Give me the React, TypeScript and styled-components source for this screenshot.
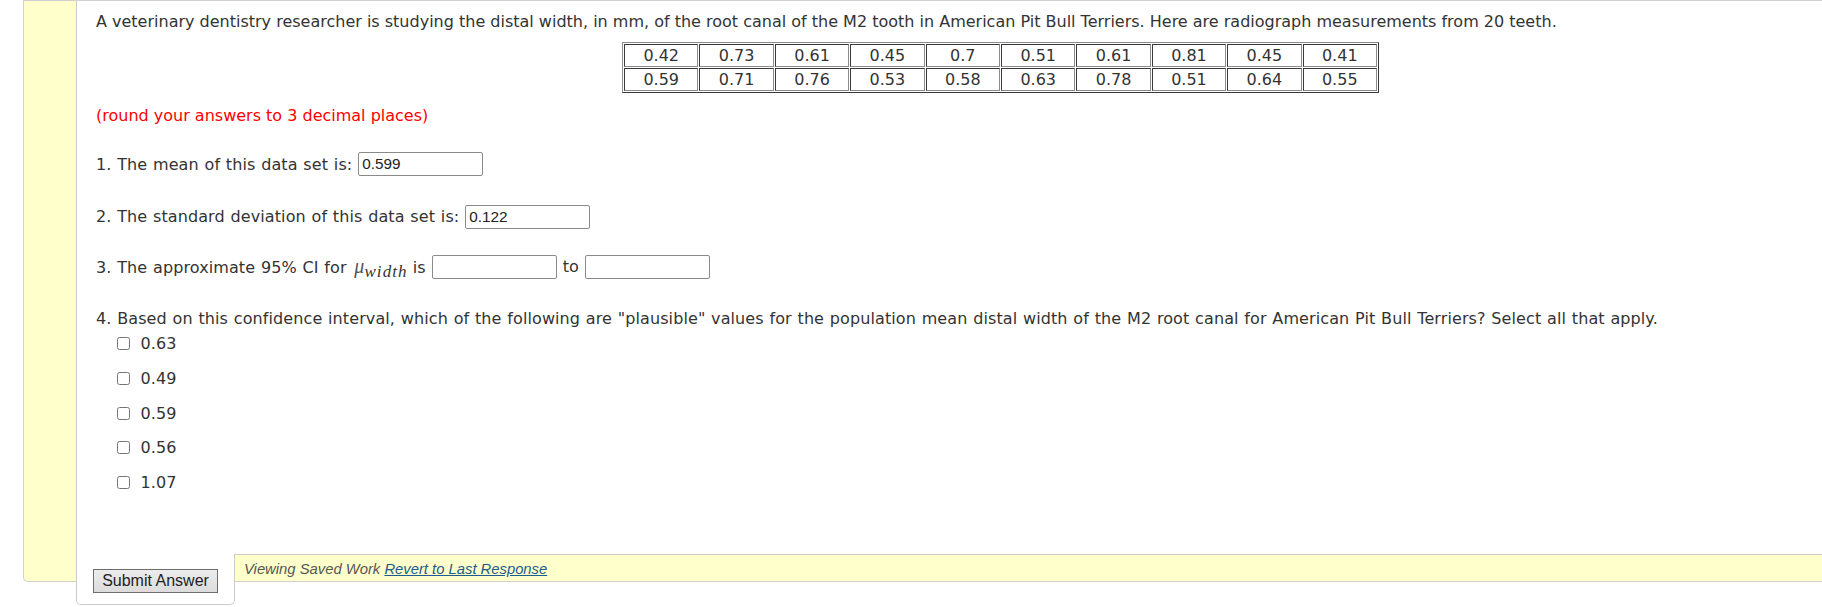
import React from 'react';
import styled, { createGlobalStyle } from 'styled-components';

const Global = createGlobalStyle`
  html, body { margin: 0; padding: 0; overflow: hidden; background: #ffffff; }
  body { font-family: "DejaVu Sans", Verdana, sans-serif; color: #333; }
`;

const Page = styled.div`
  width: 1822px;
  height: 607px;
  overflow: hidden;
  background: #fff;
`;

const ProblemBox = styled.div`
  margin-left: 23px;
  width: 1930px;
  box-sizing: border-box;
  background: #ffffcc;
  border: 1px solid #d0d0d0;
  border-right: none;
  border-radius: 0 0 0 5px;
  padding-left: 52px;
`;

const Panel = styled.div`
  background: #fff;
  border-left: 1px solid #cccccc;
  border-bottom: 1px solid #cccccc;
  padding: 11px 20px 61.8px 19px;
  display: flex;
  flex-direction: column;
  width: 1809px;
`;

const Line = styled.div<{ $mt?: number; $color?: string }>`
  height: 19px;
  line-height: 19px;
  font-size: 16px;
  white-space: nowrap;
  margin-top: ${p => p.$mt ?? 0}px;
  color: ${p => p.$color ?? '#333'};
`;

const DataTable = styled.table`
  margin: 11px auto 0;
  border-collapse: separate;
  border-spacing: 1px;
  table-layout: fixed;
  border: 1px solid;
  border-color: #8c8c8c #3a3a3a #3a3a3a #8c8c8c;
`;

const Cell = styled.td`
  width: 74.4px;
  height: 23px;
  box-sizing: border-box;
  padding: 1px;
  border: 1px solid;
  border-color: #3a3a3a #8c8c8c #8c8c8c #3a3a3a;
  text-align: center;
  font-size: 16px;
  line-height: 19px;
  color: #333;
`;

const QuestionRow = styled.div<{ $mt: number }>`
  display: flex;
  align-items: center;
  gap: 6px;
  height: 24px;
  margin-top: ${p => p.$mt}px;
  font-size: 16px;
  line-height: 19px;
  letter-spacing: 0.1px;
  word-spacing: 0.55px;
  white-space: nowrap;
`;

const AnswerInput = styled.input`
  width: 125px;
  height: 24px;
  box-sizing: border-box;
  border: 1px solid #8a8a8a;
  border-radius: 2px;
  padding: 0 3px;
  margin: 0;
  font-family: "Liberation Sans", Arial, sans-serif;
  font-size: 15.3px;
  letter-spacing: 0;
  color: #222;
  background: #fff;
  outline: none;
`;

const MathVar = styled.span`
  font-family: "Liberation Serif", "DejaVu Serif", serif;
  font-style: italic;
  font-size: 20px;
  letter-spacing: 0;
  color: #555;
  margin: 0 0 0 2px;
`;

const MathSub = styled.span`
  font-family: "Liberation Serif", "DejaVu Serif", serif;
  font-style: italic;
  font-size: 17px;
  letter-spacing: 1.1px;
  color: #333;
  vertical-align: -4px;
  line-height: 0;
  margin-right: 5px;
`;

const Options = styled.div`
  display: flex;
  flex-direction: column;
  gap: 15.8px;
  margin-top: 3.5px;
  padding-left: 20.5px;
`;

const OptionRow = styled.label`
  display: flex;
  align-items: center;
  gap: 11px;
  height: 19px;
  font-size: 16px;
  line-height: 19px;
  letter-spacing: 0.1px;
  color: #333;
`;

const Check = styled.input`
  width: 13px;
  height: 13px;
  margin: 0;
`;

const Footer = styled.div`
  display: flex;
  height: 26px;
`;

const SubmitTab = styled.div`
  align-self: flex-start;
  flex: 0 0 auto;
  width: 159px;
  height: 51px;
  margin-top: -1px;
  box-sizing: border-box;
  background: #fff;
  border: 1px solid #cccccc;
  border-top: none;
  border-radius: 0 0 5px 5px;
  padding: 15px 0 0 16px;
  position: relative;
`;

const SubmitButton = styled.button`
  width: 125px;
  height: 24px;
  box-sizing: border-box;
  border: 1px solid #6e6e6e;
  border-radius: 0;
  background: linear-gradient(#ececec, #dcdcdc);
  font-family: "Liberation Sans", Arial, sans-serif;
  font-size: 16px;
  color: #222;
  padding: 0;
  margin: 0;
`;

const Message = styled.div`
  padding: 6px 0 0 9px;
  font-family: "Liberation Sans", Arial, sans-serif;
  font-style: italic;
  font-size: 14.8px;
  color: #555;
  white-space: nowrap;
`;

const RevertLink = styled.a`
  color: #1d5c8e;
  text-decoration: underline;
`;

const rows = [
  ['0.42', '0.73', '0.61', '0.45', '0.7', '0.51', '0.61', '0.81', '0.45', '0.41'],
  ['0.59', '0.71', '0.76', '0.53', '0.58', '0.63', '0.78', '0.51', '0.64', '0.55'],
];

const choices = ['0.63', '0.49', '0.59', '0.56', '1.07'];

export default function App() {
  return (
    <Page>
      <Global />
      <ProblemBox>
        <Panel>
          <Line>
            A veterinary dentistry researcher is studying the distal width, in mm, of the root canal of the M2 tooth in American Pit Bull Terriers. Here are radiograph measurements from 20 teeth.
          </Line>
          <DataTable>
            <tbody>
              {rows.map((r, i) => (
                <tr key={i}>
                  {r.map((v, j) => (
                    <Cell key={j}>{v}</Cell>
                  ))}
                </tr>
              ))}
            </tbody>
          </DataTable>
          <Line $mt={12.5} $color="#ff0000">(round your answers to 3 decimal places)</Line>
          <QuestionRow $mt={27.5}>
            <span>1. The mean of this data set is:</span>
            <AnswerInput defaultValue="0.599" />
          </QuestionRow>
          <QuestionRow $mt={28.5}>
            <span>2. The standard deviation of this data set is:</span>
            <AnswerInput defaultValue="0.122" />
          </QuestionRow>
          <QuestionRow $mt={26}>
            <span>
              3. The approximate 95% CI for <MathVar>μ</MathVar>
              <MathSub>width</MathSub>is
            </span>
            <AnswerInput />
            <span>to</span>
            <AnswerInput />
          </QuestionRow>
          <QuestionRow $mt={28}>
            <span>
              4. Based on this confidence interval, which of the following are "plausible" values for the population mean distal width of the M2 root canal for American Pit Bull Terriers? Select all that apply.
            </span>
          </QuestionRow>
          <Options>
            {choices.map(c => (
              <OptionRow key={c}>
                <Check type="checkbox" />
                <span>{c}</span>
              </OptionRow>
            ))}
          </Options>
        </Panel>
        <Footer>
          <SubmitTab>
            <SubmitButton>Submit Answer</SubmitButton>
          </SubmitTab>
          <Message>
            Viewing Saved Work <RevertLink href="#">Revert to Last Response</RevertLink>
          </Message>
        </Footer>
      </ProblemBox>
    </Page>
  );
}
